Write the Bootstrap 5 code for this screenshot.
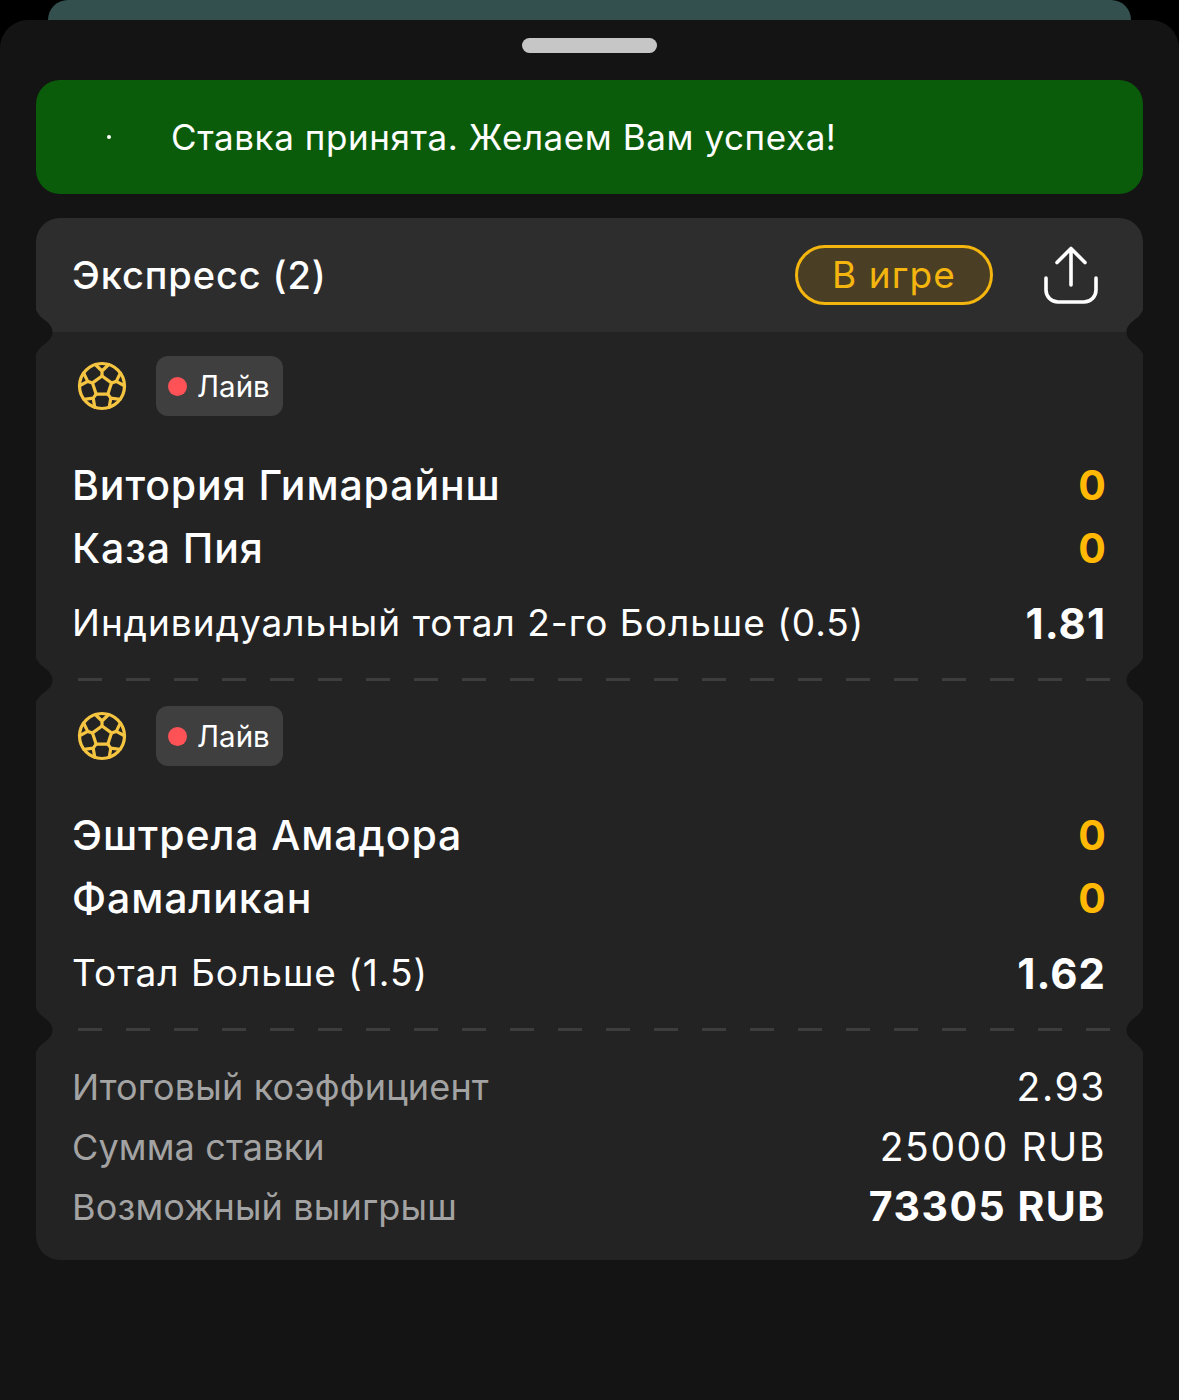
<!DOCTYPE html>
<html lang="ru"><head><meta charset="utf-8">
<link href="https://cdn.jsdelivr.net/npm/bootstrap@5.3.0/dist/css/bootstrap.min.css" rel="stylesheet">
<style>
html,body{background:#000;margin:0}
body{font-family:Inter,"Noto Sans",sans-serif;color:#fff;height:1400px;overflow:hidden}
.peek{height:20px;margin:0 48px;background:#33504f;border-radius:24px 24px 0 0}
.sheet{height:1380px;background:#141414;border-radius:28px 28px 0 0;padding:18px 36px 0}
.grip{width:135px;height:15px;background:#c6c6c6;border-radius:8px;margin:0 auto 27px}
.okbar{height:114px;background:#0a5c0a;border-radius:24px;margin-bottom:24px;font-size:35px;letter-spacing:.58px;padding-left:71px;gap:60px}
.okdot{width:4px;height:4px;background:#fff;border-radius:50%}
.ticket{position:relative}
.head{height:114px;background:#2d2d2d;border-radius:24px 24px 0 0;padding:0 45px 0 36px;font-size:38px;font-weight:500;letter-spacing:.9px}
.status{width:198px;height:60px;border:3px solid #f5b50f;background:#4a3f24;border-radius:30px;color:#f5b50f;font-size:37px;font-weight:400;letter-spacing:1.1px;margin-right:51px}
.seg{position:relative;height:350px;background:#232323;padding:24px 37px 0 36px}
.seg.last{height:228px;padding-top:25px;border-radius:0 0 24px 24px}
.seg.cut::before{content:"";position:absolute;left:42px;width:1032px;top:-4px;height:3px;background:repeating-linear-gradient(90deg,#3d3d3d 0 24px,transparent 24px 48px)}
.ball{width:50px;height:50px;margin:0 29px 0 5px}
.chip{width:127px;height:60px;background:#3f3f3f;border-radius:12px;font-size:29.5px;letter-spacing:0;gap:10px;padding-left:12px}
.reddot{width:19px;height:19px;background:#ff5257;border-radius:50%}
.teams{margin-top:38px}
.team{height:63px;font-size:41px;font-weight:500;letter-spacing:.9px}
.team b{color:#ffb905;font-weight:700;letter-spacing:0}
.pick{height:48px;margin-top:19px;font-size:37px;letter-spacing:1px}
.pick b{font-size:42px;font-weight:700;letter-spacing:1px}
.sumrow{height:60px;font-size:36px;letter-spacing:.15px;color:#a3a3a3}
.sumrow span:last-child{color:#fff;font-size:39px;letter-spacing:1.6px}
.sumrow b{color:#fff;font-size:41px;font-weight:700;letter-spacing:1.5px}
.notch{position:absolute;width:17px;height:44px;fill:#141414;top:0}
.nl{left:0}.nr{right:0;transform:scaleX(-1)}
</style></head><body>
<svg width="0" height="0" class="d-block"><defs>
<path id="nt" d="M0 0C3 6 6 8 10 11C14 14 16.5 18 16.5 22C16.5 26 14 30 10 33C6 36 3 38 0 44Z"/>
<g id="fb" fill="none" stroke="#f5c542" stroke-width="3.2" stroke-linejoin="round" stroke-linecap="round">
<circle cx="25" cy="25" r="22.500"/><polygon points="25,15 34.5,21.9 30.9,33.1 19.1,33.1 15.5,21.9"/>
<g id="arm"><path d="M25 15V10M25 10L18.3 3.500M25 10L31.700 3.500"/></g>
<use href="#arm" transform="rotate(72 25 25)"/><use href="#arm" transform="rotate(144 25 25)"/><use href="#arm" transform="rotate(216 25 25)"/><use href="#arm" transform="rotate(288 25 25)"/>
</g></defs></svg>
<div class="peek"></div>
<div class="sheet">
<div class="grip"></div>
<div class="okbar d-flex align-items-center"><span class="okdot"></span><span>Ставка принята. Желаем Вам успеха!</span></div>
<div class="ticket">
<div class="head d-flex align-items-center"><span class="me-auto">Экспресс (2)</span><span class="status d-flex align-items-center justify-content-center">В игре</span>
<svg width="54" height="58" viewBox="0 0 54 58" fill="none" stroke="#fff" stroke-width="3.6" stroke-linecap="round" stroke-linejoin="round"><path d="M27 39V3M13 16.500L27 2.500L41 16.500"/><path d="M2 32V44A12 12 0 0 0 14 56H40A12 12 0 0 0 52 44V32"/></svg></div>
<div class="seg">
<svg class="notch nl" style="top:-22px"><use href="#nt"/></svg><svg class="notch nr" style="top:-22px"><use href="#nt"/></svg>
<div class="d-flex align-items-center"><svg class="ball" viewBox="0 0 50 50"><use href="#fb"/></svg><div class="chip d-flex align-items-center"><span class="reddot"></span><span>Лайв</span></div></div>
<div class="teams"><div class="team d-flex justify-content-between align-items-center"><span>Витория Гимарайнш</span><b>0</b></div><div class="team d-flex justify-content-between align-items-center"><span>Каза Пия</span><b>0</b></div></div>
<div class="pick d-flex justify-content-between align-items-center"><span>Индивидуальный тотал 2-го Больше (0.5)</span><b>1.81</b></div>
</div>
<div class="seg cut">
<svg class="notch nl" style="top:-24px"><use href="#nt"/></svg><svg class="notch nr" style="top:-24px"><use href="#nt"/></svg>
<div class="d-flex align-items-center"><svg class="ball" viewBox="0 0 50 50"><use href="#fb"/></svg><div class="chip d-flex align-items-center"><span class="reddot"></span><span>Лайв</span></div></div>
<div class="teams"><div class="team d-flex justify-content-between align-items-center"><span>Эштрела Амадора</span><b>0</b></div><div class="team d-flex justify-content-between align-items-center"><span>Фамаликан</span><b>0</b></div></div>
<div class="pick d-flex justify-content-between align-items-center"><span>Тотал Больше (1.5)</span><b>1.62</b></div>
</div>
<div class="seg last cut">
<svg class="notch nl" style="top:-24px"><use href="#nt"/></svg><svg class="notch nr" style="top:-24px"><use href="#nt"/></svg>
<div class="sumrow d-flex justify-content-between align-items-center"><span>Итоговый коэффициент</span><span>2.93</span></div>
<div class="sumrow d-flex justify-content-between align-items-center"><span>Сумма ставки</span><span>25000 RUB</span></div>
<div class="sumrow d-flex justify-content-between align-items-center"><span>Возможный выигрыш</span><b>73305 RUB</b></div>
</div>
</div>
</div>
<script src="https://cdn.jsdelivr.net/npm/bootstrap@5.3.0/dist/js/bootstrap.bundle.min.js"></script>
</body></html>
